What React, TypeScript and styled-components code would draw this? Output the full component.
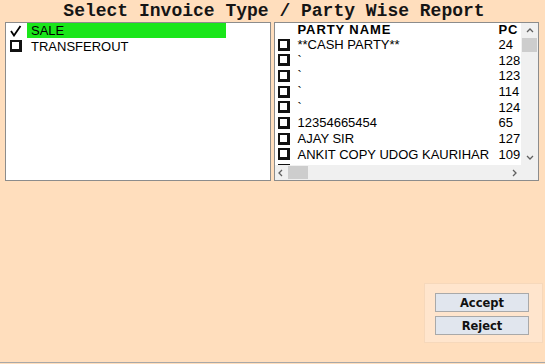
import styled, { createGlobalStyle } from "styled-components";

const GlobalStyle = createGlobalStyle`
  html, body {
    margin: 0;
    padding: 0;
    background: #ffdebd;
  }
`;

type Party = { name: string; pc: string };

const parties: Party[] = [
  { name: "**CASH PARTY**", pc: "24" },
  { name: "`", pc: "128" },
  { name: "`", pc: "123" },
  { name: "`", pc: "114" },
  { name: "`", pc: "124" },
  { name: "12354665454", pc: "65" },
  { name: "AJAY SIR", pc: "127" },
  { name: "ANKIT COPY UDOG KAURIHAR", pc: "109" },
  { name: "ANIL KUMAR", pc: "156" },
];

const invoiceTypes = [
  { name: "SALE", checked: true },
  { name: "TRANSFEROUT", checked: false },
];

const CheckMark = () => (
  <svg width="12" height="12" viewBox="0 0 12 12">
    <polyline points="1,6 4,10.5 10.5,1" fill="none" stroke="#000" strokeWidth="1.8" />
  </svg>
);

const Chevron = ({ dir }: { dir: "up" | "down" | "left" | "right" }) => {
  const pts = {
    up: "1,5 4,2 7,5",
    down: "1,2 4,5 7,2",
    left: "5,1 2,4 5,7",
    right: "2,1 5,4 2,7",
  }[dir];
  return (
    <svg width="8" height="8" viewBox="0 0 8 8">
      <polyline points={pts} fill="none" stroke="#606060" strokeWidth="1.3" />
    </svg>
  );
};

export default function App() {
  return (
    <Window>
      <GlobalStyle />
      <Title>Select Invoice Type / Party Wise Report</Title>
      <ListsRow>
        <ListBox>
          <TypeList>
            {invoiceTypes.map((t) => (
              <TypeRow key={t.name}>
                <Mark>{t.checked ? <CheckMark /> : <Box />}</Mark>
                <TypeLabel selected={t.checked}>{t.name}</TypeLabel>
              </TypeRow>
            ))}
          </TypeList>
        </ListBox>
        <ListBox>
          <GridBox>
            <Viewport>
              <HeaderRow>
                <span />
                <HeadCell>PARTY NAME</HeadCell>
                <HeadCell>PC</HeadCell>
              </HeaderRow>
              {parties.map((p, i) => (
                <PartyRow key={i}>
                  <Mark>
                    <Box />
                  </Mark>
                  <Cell>{p.name}</Cell>
                  <Cell>{p.pc}</Cell>
                </PartyRow>
              ))}
            </Viewport>
            <VScroll>
              <ArrowBtn>
                <Chevron dir="up" />
              </ArrowBtn>
              <VThumb />
              <VTrack />
              <ArrowBtn>
                <Chevron dir="down" />
              </ArrowBtn>
            </VScroll>
            <HScroll>
              <HArrow>
                <Chevron dir="left" />
              </HArrow>
              <HThumb />
              <HTrack />
              <HArrow>
                <Chevron dir="right" />
              </HArrow>
            </HScroll>
            <Corner />
          </GridBox>
        </ListBox>
      </ListsRow>
      <Footer>
        <ButtonPanel>
          <ActionButton>Accept</ActionButton>
          <ActionButton>Reject</ActionButton>
        </ButtonPanel>
      </Footer>
    </Window>
  );
}

const Window = styled.div`
  height: 362px;
  display: flex;
  flex-direction: column;
  background: #ffdebd;
  border-bottom: 1px solid #a8a8a8;
  font-family: "Liberation Sans", Arial, sans-serif;
`;

const Title = styled.div`
  height: 22px;
  line-height: 22px;
  text-align: center;
  font-family: "Liberation Mono", "Courier New", monospace;
  font-weight: bold;
  font-size: 18px;
  color: #151515;
  padding-left: 3px;
`;

const ListsRow = styled.div`
  display: flex;
  gap: 3px;
  padding: 0 6px 0 5px;
  height: 159px;
`;

const ListBox = styled.div`
  flex: 1;
  background: #fff;
  border: 1px solid #8c8c8c;
  overflow: hidden;
`;

const TypeList = styled.div`
  padding: 0 0 0 4px;
`;

const TypeRow = styled.div`
  display: flex;
  align-items: center;
  height: 15.67px;
  font-size: 13px;
  color: #000;
`;

const Mark = styled.span`
  width: 17px;
  display: flex;
  align-items: center;
`;

const Box = styled.span`
  display: block;
  width: 7px;
  height: 7px;
  background: #fff;
  border: 2px solid #111;
  border-right-width: 3px;
  border-bottom-width: 3px;
`;

const TypeLabel = styled.span<{ selected: boolean }>`
  width: 199px;
  height: 15px;
  line-height: 15px;
  padding-left: 4px;
  box-sizing: border-box;
  background: ${(p) => (p.selected ? "#1ae61a" : "transparent")};
`;

const GridBox = styled.div`
  display: grid;
  grid-template-columns: 1fr 17px;
  grid-template-rows: 1fr 15px;
  height: 100%;
`;

const Viewport = styled.div`
  overflow: hidden;
  padding-left: 3px;
`;

const HeaderRow = styled.div`
  display: grid;
  grid-template-columns: 20px 201px auto;
  height: 14px;
  line-height: 14px;
`;

const HeadCell = styled.span`
  font-weight: bold;
  font-size: 13px;
  letter-spacing: 0.9px;
  white-space: nowrap;
`;

const PartyRow = styled.div`
  display: grid;
  grid-template-columns: 20px 201px auto;
  align-items: center;
  height: 15.67px;
  font-size: 13px;
`;

const Cell = styled.span`
  white-space: nowrap;
  line-height: 15.67px;
`;

const VScroll = styled.div`
  background: #f0f0f0;
  display: flex;
  flex-direction: column;
`;

const ArrowBtn = styled.div`
  height: 15px;
  display: flex;
  align-items: center;
  justify-content: center;
`;

const VThumb = styled.div`
  height: 14px;
  margin: 0 1px;
  background: #cdcdcd;
`;

const VTrack = styled.div`
  flex: 1;
`;

const HScroll = styled.div`
  background: #f0f0f0;
  display: flex;
`;

const HArrow = styled.div`
  width: 13px;
  display: flex;
  align-items: center;
  justify-content: center;
`;

const HThumb = styled.div`
  width: 20px;
  margin: 1px 0;
  background: #cdcdcd;
`;

const HTrack = styled.div`
  flex: 1;
`;

const Corner = styled.div`
  background: #f0f0f0;
`;

const Footer = styled.div`
  flex: 1;
  display: flex;
  justify-content: flex-end;
  align-items: flex-end;
  padding: 0 2px 19px 0;
`;

const ButtonPanel = styled.div`
  width: 119px;
  box-sizing: border-box;
  padding: 9px 13px 7px 10px;
  background: #ffe5cd;
  border: 1px solid #f6d8bb;
  display: flex;
  flex-direction: column;
  gap: 4px;
`;

const ActionButton = styled.button`
  height: 19px;
  padding: 0;
  background: #e1e6ee;
  border: 1px solid #a9a9a9;
  font-family: "DejaVu Sans", Tahoma, sans-serif;
  font-weight: bold;
  font-size: 11.5px;
  color: #111;
`;
